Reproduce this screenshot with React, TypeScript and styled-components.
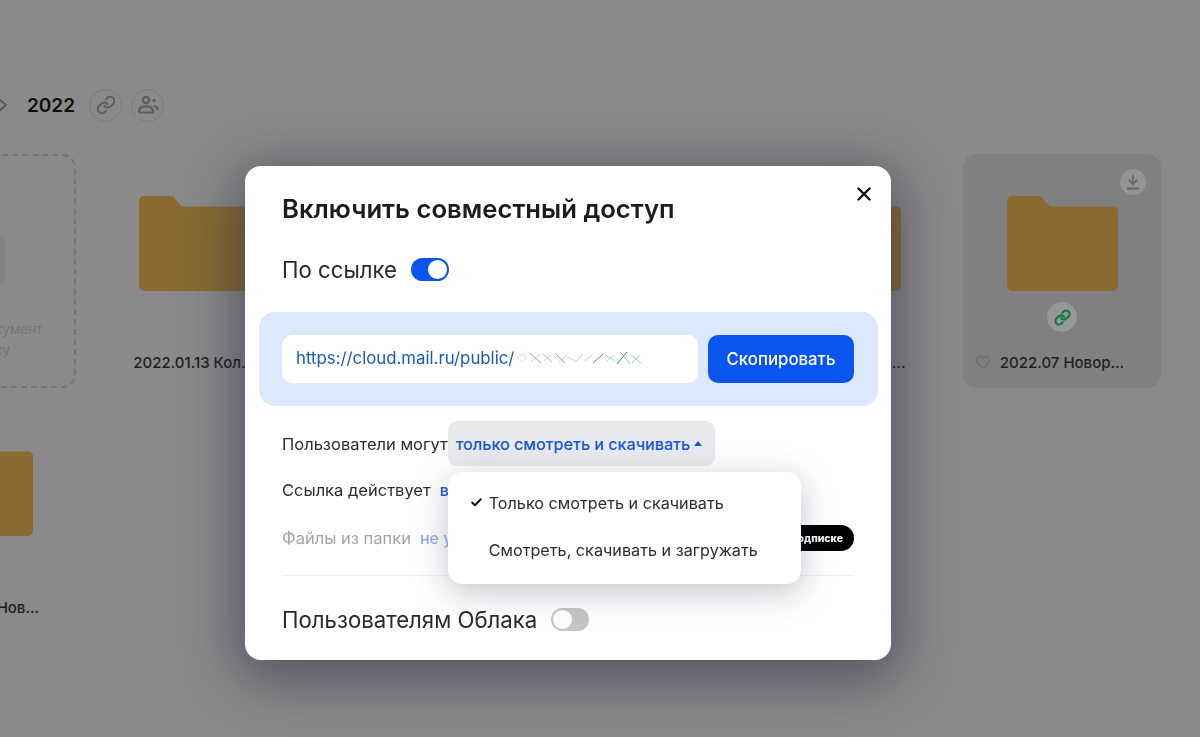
import React from 'react';
import styled, { createGlobalStyle } from 'styled-components';
import { Check, Heart, Link as LinkIcon, X } from 'lucide-react';

const GlobalStyle = createGlobalStyle`
  html, body {
    margin: 0;
    height: 100%;
    overflow: hidden;
    background: #8a8a8a;
    font-family: Inter, "Noto Sans", "Liberation Sans", sans-serif;
  }
`;

const Page = styled.div`
  height: 737px;
  width: 1200px;
  overflow: hidden;
  padding-top: 88px;
  box-sizing: border-box;
`;

const Crumbs = styled.div`
  display: flex;
  align-items: center;
  gap: 9px;
  height: 34px;
  margin: 0 0 32px -5px;
`;

const CrumbTitle = styled.span`
  margin: 0 5px 0 11px;
  font-size: 19px;
  font-weight: 600;
  color: #0d0d0d;
`;

const RoundAction = styled.span`
  display: flex;
  align-items: center;
  justify-content: center;
  box-sizing: border-box;
  width: 33px;
  height: 33px;
  border: 1px solid #7d7d7d;
  border-radius: 50%;
  color: #5c5c5c;
`;

const Grid = styled.div`
  display: grid;
  grid-template-columns: repeat(6, 198px);
  grid-auto-rows: 234px;
  column-gap: 19px;
  row-gap: 11px;
  margin-left: -122px;
`;

const Card = styled.div<{ $selected?: boolean }>`
  position: relative;
  display: flex;
  flex-direction: column;
  align-items: center;
  padding-top: 42px;
  box-sizing: border-box;
  border-radius: 14px;
  background: ${({ $selected }) => ($selected ? '#808080' : 'transparent')};
`;

const UploadCard = styled.div`
  display: flex;
  flex-direction: column;
  align-items: center;
  box-sizing: border-box;
  padding-top: 80px;
  border: 2px dashed #787878;
  border-radius: 14px;
`;

const UploadButton = styled.div`
  width: 56px;
  height: 50px;
  border-radius: 8px;
  background: #828282;
`;

const UploadHint = styled.div`
  margin-top: 33px;
  font-size: 13.6px;
  line-height: 21px;
  text-align: center;
  white-space: nowrap;
  color: #757575;
`;

const BadgeSlot = styled.div`
  display: flex;
  align-items: center;
  justify-content: center;
  width: 30px;
  height: 30px;
  margin-top: 11px;
  border-radius: 50%;
`;

const ShareBadge = styled(BadgeSlot)`
  background: #979797;
  color: #0e7a3e;
`;

const CardLabel = styled.div`
  display: flex;
  align-items: center;
  gap: 9px;
  height: 22px;
  margin-top: 19px;
  font-size: 15px;
  font-weight: 500;
  white-space: nowrap;
  color: #1e1e1e;
`;

const FavIcon = styled(Heart)`
  margin-left: -25px;
  color: #6f6f6f;
`;

const DownloadButton = styled.span`
  position: absolute;
  top: 15px;
  right: 15px;
  display: flex;
  align-items: center;
  justify-content: center;
  width: 26px;
  height: 26px;
  border-radius: 50%;
  background: #949494;
  color: #646464;
`;

const Overlay = styled.div`
  position: fixed;
  inset: 0;
  padding: 166px 0 0 245px;
  box-sizing: border-box;
`;

const Modal = styled.div`
  position: relative;
  box-sizing: border-box;
  width: 646px;
  height: 494px;
  padding: 26px 37px 26px;
  border-radius: 16px;
  background: #fff;
  box-shadow: 0 12px 56px 6px rgba(38, 42, 66, 0.6);
`;

const CloseButton = styled.span`
  position: absolute;
  top: 17px;
  right: 16px;
  display: flex;
  color: #0c0c0c;
`;

const Title = styled.h2`
  margin: 0;
  font-size: 25.7px;
  line-height: 34px;
  font-weight: 600;
  white-space: nowrap;
  color: #1c1c1c;
`;

const ToggleRow = styled.div<{ $top: number }>`
  display: flex;
  align-items: center;
  gap: 14px;
  height: 30px;
  margin-top: ${({ $top }) => $top}px;
  font-size: 22.2px;
  white-space: nowrap;
  color: #2a2a2a;
`;

const Toggle = styled.span<{ $on?: boolean }>`
  display: flex;
  justify-content: ${({ $on }) => ($on ? 'flex-end' : 'flex-start')};
  box-sizing: border-box;
  width: 38px;
  height: 23px;
  padding: 2px;
  border-radius: 12px;
  background: ${({ $on }) => ($on ? '#0a55ee' : '#c6c6c6')};

  &::after {
    content: '';
    width: 19px;
    height: 19px;
    border-radius: 50%;
    background: #fff;
  }
`;

const LinkPanel = styled.div`
  display: flex;
  gap: 10px;
  height: 94px;
  box-sizing: border-box;
  margin: 28px -24px 0 -23px;
  padding: 23px 24px 23px 23px;
  border-radius: 16px;
  background: #dce8fb;
`;

const LinkField = styled.div`
  flex: 1;
  display: flex;
  align-items: center;
  padding: 0 0 2px 14px;
  border-radius: 10px;
  background: #fff;
  font-size: 16.8px;
  white-space: nowrap;
  color: #1a5bb8;
`;

const Scribble = styled.svg`
  margin-left: 1px;
  flex: none;
`;

const CopyButton = styled.button`
  width: 146px;
  border: 0;
  padding: 0;
  border-radius: 10px;
  background: #0a55ee;
  font: 500 16.8px Inter, "Noto Sans", sans-serif;
  color: #fff;
`;

const OptionRow = styled.div<{ $top: number; $height: number; $muted?: boolean }>`
  display: flex;
  align-items: center;
  height: ${({ $height }) => $height}px;
  margin-top: ${({ $top }) => $top}px;
  font-size: 16.5px;
  white-space: nowrap;
  color: ${({ $muted }) => ($muted ? '#a3a3a3' : '#2c2c2c')};
`;

const OptionValue = styled.span<{ $muted?: boolean }>`
  margin-left: 9px;
  font-size: 16.1px;
  font-weight: 500;
  color: ${({ $muted }) => ($muted ? '#8fb0ee' : '#1358d8')};
`;

const SelectWrap = styled.div`
  position: relative;
`;

const SelectButton = styled.div`
  display: flex;
  align-items: center;
  gap: 4px;
  height: 45px;
  padding: 0 13px 0 8px;
  border-radius: 9px;
  background: #e9eaee;
  font-size: 16.1px;
  font-weight: 500;
  color: #1358d8;
`;

const Caret = styled.span`
  width: 0;
  height: 0;
  border-left: 4px solid transparent;
  border-right: 4px solid transparent;
  border-bottom: 5px solid #1358d8;
`;

const Menu = styled.div`
  position: absolute;
  z-index: 2;
  top: 51px;
  left: 0;
  display: flex;
  flex-direction: column;
  box-sizing: border-box;
  width: 353px;
  height: 112px;
  padding: 7px 0 11px;
  border-radius: 14px;
  background: #fff;
  box-shadow: 0 8px 34px rgba(52, 58, 92, 0.3);
`;

const MenuItem = styled.div`
  flex: 1;
  display: flex;
  align-items: center;
  gap: 6px;
  padding-left: 22px;
  font-size: 16.2px;
  color: #2c2c2c;
`;

const CheckSlot = styled.span`
  display: flex;
  width: 13px;
  color: #111;
`;

const PlanPill = styled.span`
  display: flex;
  align-items: center;
  height: 26px;
  margin-left: auto;
  padding: 0 11px 0 12px;
  border-radius: 13px;
  background: #000;
  font-size: 10.5px;
  font-weight: 800;
  color: #fff;
`;

const Divider = styled.div`
  height: 1px;
  margin-top: 24px;
  background: #f0f0f0;
`;

const Folder = () => (
  <svg width="111" height="95" viewBox="0 0 111 95" fill="#8a6a30">
    <path d="M5 0h26c2 0 3.6.8 4.8 2.4l5 6.2c1 1.2 2 1.9 3.7 1.9H106a5 5 0 0 1 5 5V90a5 5 0 0 1-5 5H5a5 5 0 0 1-5-5V5a5 5 0 0 1 5-5z" />
  </svg>
);

const PeopleIcon = () => (
  <svg width="22" height="22" viewBox="0 0 22 22" fill="none" stroke="currentColor" strokeWidth="2.2">
    <circle cx="9" cy="6" r="3.2" />
    <path d="M2 17.5c0-3.4 3-5.2 7-5.2s7 1.8 7 5.2c0 .7-.4 1-1 1H3c-.6 0-1-.3-1-1z" />
    <circle cx="17" cy="6.5" r="1.7" fill="currentColor" stroke="none" />
    <path d="M17.5 12c1.7.4 3 1.5 3 3.5" strokeLinecap="round" />
  </svg>
);

const DownloadIcon = () => (
  <svg width="16" height="16" viewBox="0 0 16 16" fill="none" stroke="currentColor" strokeWidth="1.7">
    <path d="M8 1v8.5M4 6l4 4 4-4" />
    <path d="M2 14.5h12" strokeWidth="2" />
  </svg>
);

const Chevron = () => (
  <svg width="12" height="16" viewBox="0 0 12 16" fill="none" stroke="#5a5a5a" strokeWidth="2.2">
    <path d="M4 2l7 6-7 6" />
  </svg>
);

// замазанный хвост ссылки
const strokes = [
  [2, 9, 7, 5, 0.25], [7, 5, 12, 9, 0.25], [2, 9, 7, 13, 0.2], [7, 13, 12, 9, 0.2],
  [15, 4, 26, 14, 0.55], [16, 13, 25, 5, 0.3], [28, 5, 37, 13, 0.4], [29, 12, 36, 6, 0.25],
  [40, 4, 50, 14, 0.5], [44, 13, 52, 6, 0.3], [52, 8, 60, 12, 0.25], [60, 13, 68, 5, 0.3],
  [70, 12, 77, 6, 0.3], [78, 14, 88, 5, 0.8], [90, 6, 100, 12, 0.3], [92, 12, 99, 6, 0.3],
  [102, 15, 112, 3, 0.85], [105, 3, 115, 15, 0.45], [116, 6, 126, 14, 0.35], [117, 14, 125, 6, 0.35],
];

const Redacted = () => (
  <Scribble width="128" height="18" viewBox="0 0 128 18" stroke="#1a5bb8" strokeWidth="1">
    {strokes.map(([x1, y1, x2, y2, o]) => (
      <line key={`${x1}-${y1}`} x1={x1} y1={y1} x2={x2} y2={y2} strokeOpacity={o} />
    ))}
  </Scribble>
);

const FolderCard: React.FC<{ label: string; selected?: boolean }> = ({ label, selected }) => (
  <Card $selected={selected}>
    {selected && (
      <DownloadButton>
        <DownloadIcon />
      </DownloadButton>
    )}
    <Folder />
    {selected ? (
      <ShareBadge>
        <LinkIcon size={17} strokeWidth={3} />
      </ShareBadge>
    ) : (
      <BadgeSlot />
    )}
    <CardLabel>
      {selected && <FavIcon size={16} strokeWidth={1.6} />}
      {label}
    </CardLabel>
  </Card>
);

const App: React.FC = () => (
  <>
    <GlobalStyle />
    <Page>
      <Crumbs>
        <Chevron />
        <CrumbTitle>2022</CrumbTitle>
        <RoundAction>
          <LinkIcon size={20} strokeWidth={2.2} />
        </RoundAction>
        <RoundAction>
          <PeopleIcon />
        </RoundAction>
      </Crumbs>
      <Grid>
        <UploadCard>
          <UploadButton />
          <UploadHint>
            Создайте документ
            <br />
            или папку
          </UploadHint>
        </UploadCard>
        <FolderCard label="2022.01.13 Кол..." />
        <FolderCard label="2022.02 Зима" />
        <FolderCard label="2022.03 Весна" />
        <FolderCard label="2022.05 Крым..." />
        <FolderCard label="2022.07 Новор..." selected />
        <FolderCard label="2022.07.01 Нов..." />
      </Grid>
    </Page>
    <Overlay>
      <Modal>
        <CloseButton>
          <X size={22} strokeWidth={2.6} />
        </CloseButton>
        <Title>Включить совместный доступ</Title>
        <ToggleRow $top={28}>
          По ссылке
          <Toggle $on />
        </ToggleRow>
        <LinkPanel>
          <LinkField>
            https://cloud.mail.ru/public/
            <Redacted />
          </LinkField>
          <CopyButton>Скопировать</CopyButton>
        </LinkPanel>
        <OptionRow $top={15} $height={45}>
          Пользователи могут
          <SelectWrap>
            <SelectButton>
              только смотреть и скачивать
              <Caret />
            </SelectButton>
            <Menu>
              <MenuItem>
                <CheckSlot>
                  <Check size={13} strokeWidth={3.5} />
                </CheckSlot>
                Только смотреть и скачивать
              </MenuItem>
              <MenuItem>
                <CheckSlot />
                Смотреть, скачивать и загружать
              </MenuItem>
            </Menu>
          </SelectWrap>
        </OptionRow>
        <OptionRow $top={12} $height={24}>
          Ссылка действует
          <OptionValue>всегда</OptionValue>
        </OptionRow>
        <OptionRow $top={23} $height={26} $muted>
          Файлы из папки
          <OptionValue $muted>не удалять</OptionValue>
          <PlanPill>Доступно по подписке</PlanPill>
        </OptionRow>
        <Divider />
        <ToggleRow $top={28}>
          Пользователям Облака
          <Toggle />
        </ToggleRow>
      </Modal>
    </Overlay>
  </>
);

export default App;
